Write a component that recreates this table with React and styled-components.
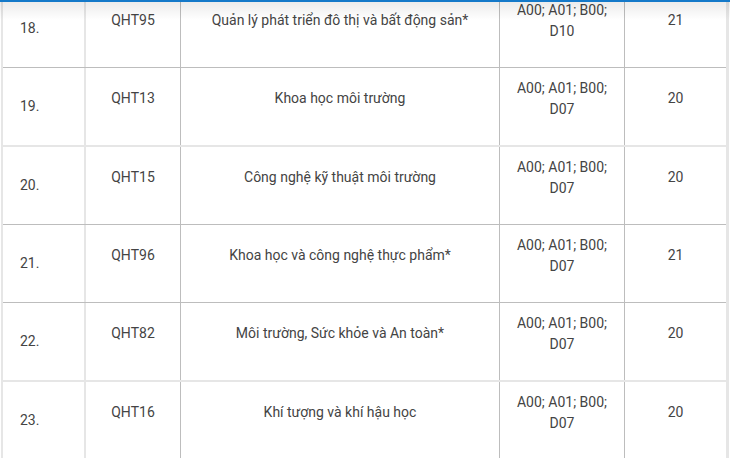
import React from "react";
import styled, { createGlobalStyle } from "styled-components";

const Global = createGlobalStyle`
  html, body { margin: 0; padding: 0; background: #fff; }
  body { overflow: hidden; }
  * { box-sizing: border-box; }
`;

const Viewport = styled.div`
  position: relative;
  width: 730px;
  height: 458px;
  overflow: hidden;
  background: #fff;
  font-family: Roboto, "Liberation Sans", Arial, sans-serif;
  font-size: 14px;
  line-height: 21px;
  color: #444;
`;

const HeaderEdge = styled.div`
  position: absolute;
  top: 0;
  left: 0;
  right: 0;
  height: 20px;
  border-top: 2px solid #1479c9;
  background: linear-gradient(rgba(0, 0, 0, 0.08), rgba(0, 0, 0, 0));
  pointer-events: none;
`;

const Table = styled.div`
  margin: -10px 0 0 1px;
  width: 728px;
  border-left: 2px solid #e6e6e6;
  border-right: 3px solid #e6e6e6;
`;

const Row = styled.div`
  display: grid;
  grid-template-columns: 83px 95px 319px 125px 101px;
  height: ${(p) => (p.$light ? 79 : 78)}px;
  border-bottom: ${(p) => (p.$light ? "2px solid #e6e6e6" : "1px solid #bdbdbd")};
`;

const Cell = styled.div`
  display: flex;
  align-items: center;
  justify-content: ${(p) => (p.$left ? "flex-start" : "center")};
  text-align: center;
  padding: ${(p) => (p.$left ? "0 0 0 17px" : "0 8px")};
  border-right: ${(p) => (p.$light ? "2px solid #e6e6e6" : "1px solid #bdbdbd")};
  &:last-child { border-right: none; }
`;

const Para = styled.p`
  margin: 0 0 16px;
`;

const rows = [
  ["18.", "QHT95", "Quản lý phát triển đô thị và bất động sản*", "A00; A01; B00; D10", "21", false],
  ["19.", "QHT13", "Khoa học môi trường", "A00; A01; B00; D07", "20", true],
  ["20.", "QHT15", "Công nghệ kỹ thuật môi trường", "A00; A01; B00; D07", "20", false],
  ["21.", "QHT96", "Khoa học và công nghệ thực phẩm*", "A00; A01; B00; D07", "21", false],
  ["22.", "QHT82", "Môi trường, Sức khỏe và An toàn*", "A00; A01; B00; D07", "20", true],
  ["23.", "QHT16", "Khí tượng và khí hậu học", "A00; A01; B00; D07", "20", false],
];

export default function App() {
  return (
    <Viewport>
      <Global />
      <Table>
        {rows.map(([no, code, name, combo, score, light]) => (
          <Row key={no} $light={light}>
            <Cell $left $light>{no}</Cell>
            <Cell><Para>{code}</Para></Cell>
            <Cell><Para>{name}</Para></Cell>
            <Cell><Para>{combo}</Para></Cell>
            <Cell><Para>{score}</Para></Cell>
          </Row>
        ))}
      </Table>
      <HeaderEdge />
    </Viewport>
  );
}
